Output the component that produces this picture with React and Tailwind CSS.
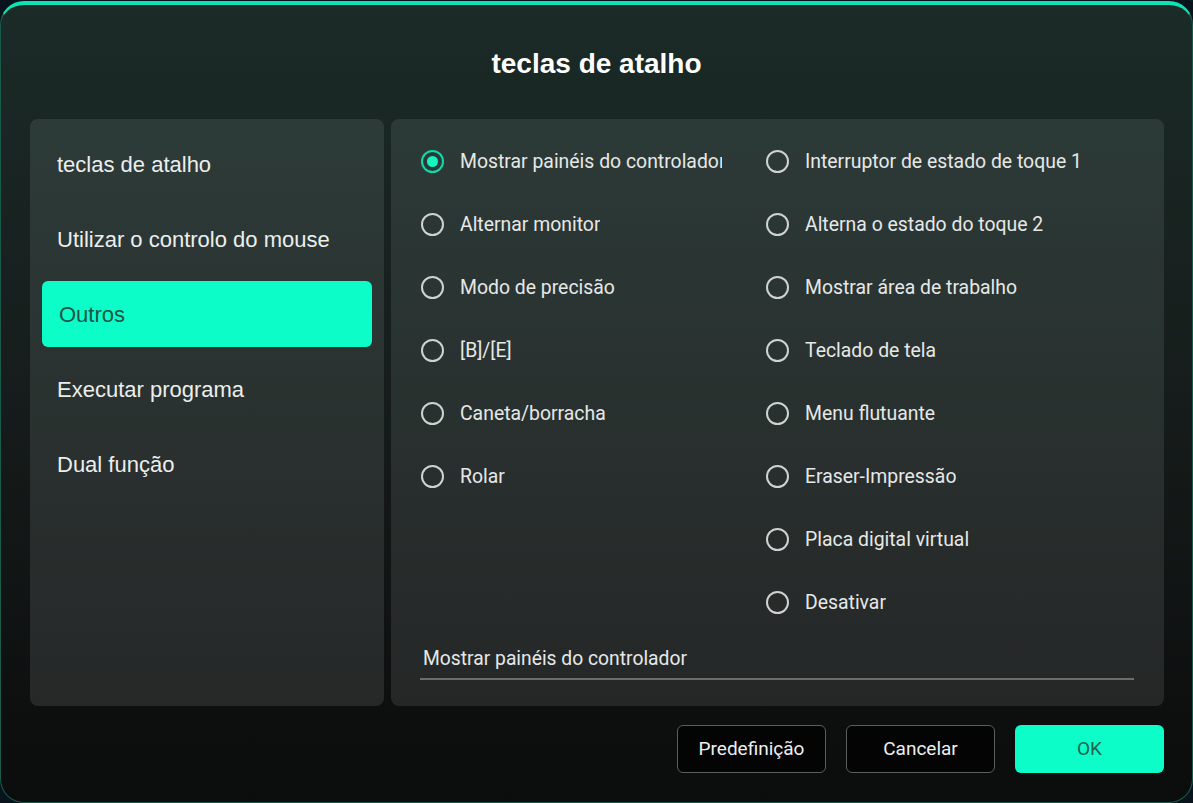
import React, { useState } from 'react';

const menuItems = [
  'teclas de atalho',
  'Utilizar o controlo do mouse',
  'Outros',
  'Executar programa',
  'Dual função',
];

const leftOptions = [
  'Mostrar painéis do controlador',
  'Alternar monitor',
  'Modo de precisão',
  '[B]/[E]',
  'Caneta/borracha',
  'Rolar',
];

const rightOptions = [
  'Interruptor de estado de toque 1',
  'Alterna o estado do toque 2',
  'Mostrar área de trabalho',
  'Teclado de tela',
  'Menu flutuante',
  'Eraser-Impressão',
  'Placa digital virtual',
  'Desativar',
];

const Radio = ({ label, checked, onSelect, clip }) => (
  <button
    type="button"
    onClick={onSelect}
    className="flex h-[63px] items-center gap-[16px] text-left"
  >
    <span
      className={`flex h-[23px] w-[23px] shrink-0 items-center justify-center rounded-full border-2 ${
        checked ? 'border-[#12d9ac]' : 'border-[#cfd2d1]'
      }`}
    >
      {checked && <span className="h-[11px] w-[11px] rounded-full bg-[#14f5c2]" />}
    </span>
    <span
      className={`overflow-hidden whitespace-nowrap text-[19.4px] text-[#e6e8e7] ${
        clip ? 'w-[262px]' : ''
      }`}
    >
      {label}
    </span>
  </button>
);

const App = () => {
  const [tab, setTab] = useState('Outros');
  const [choice, setChoice] = useState('Mostrar painéis do controlador');

  return (
    <div className="min-h-[803px] bg-[#08131c] pt-[1px] font-['Liberation_Sans',Arial,sans-serif]">
      <div className="flex h-[802px] flex-col rounded-[24px] border-x border-b border-t-[4px] border-[#1a5a4b] border-t-[#10e2b3] bg-gradient-to-b from-[#1b2b27] via-[#161c1b] to-[#0b0c0c]">
        <div className="flex h-[114px] items-center justify-center pt-[4px]">
          <h1 className="text-[28px] font-bold text-white">teclas de atalho</h1>
        </div>

        <div className="flex h-[587px] gap-[7px] pl-[29px] pr-[28px]">
          {/* side menu */}
          <nav className="flex w-[354px] flex-col gap-[9px] rounded-[8px] bg-gradient-to-b from-[#2d3b38] to-[#262828] px-[12px] pt-[12px]">
            {menuItems.map((item) => (
              <button
                key={item}
                type="button"
                onClick={() => setTab(item)}
                className={`flex h-[66px] items-center rounded-[6px] pr-[15px] text-left text-[22px] ${
                  tab === item ? 'bg-[#0dfdc9] pl-[17px] text-[#1d5447]' : 'pl-[15px] text-[#eceeed]'
                }`}
              >
                {item}
              </button>
            ))}
          </nav>

          {/* options */}
          <section className="flex w-[773px] flex-col rounded-[8px] bg-gradient-to-b from-[#2c3a37] to-[#252727] pt-[11px] font-['Roboto',sans-serif]">
            <div className="flex">
              <div className="flex w-[375px] flex-col pl-[30px]">
                {leftOptions.map((o, i) => (
                  <Radio
                    key={o}
                    label={o}
                    clip={i === 0}
                    checked={choice === o}
                    onSelect={() => setChoice(o)}
                  />
                ))}
              </div>
              <div className="flex flex-col">
                {rightOptions.map((o) => (
                  <Radio key={o} label={o} checked={choice === o} onSelect={() => setChoice(o)} />
                ))}
              </div>
            </div>
            <div className="ml-[29px] mt-[11px] w-[714px] border-b-2 border-[#6b6d6c] pb-[4px] pl-[3px] text-[19.3px] text-[#e6e8e7]">
              {choice}
            </div>
          </section>
        </div>

        <div className="flex justify-end gap-[20px] pr-[28px] pt-[19px] font-['Roboto',sans-serif] text-[19px]">
          <button
            type="button"
            className="h-[48px] w-[149px] rounded-[6px] border-[1.5px] border-[#5c5e5d] bg-[#040404] text-[#eeeeee]"
          >
            Predefinição
          </button>
          <button
            type="button"
            className="h-[48px] w-[149px] rounded-[6px] border-[1.5px] border-[#5c5e5d] bg-[#040404] text-[#eeeeee]"
          >
            Cancelar
          </button>
          <button
            type="button"
            className="h-[48px] w-[149px] rounded-[6px] bg-[#0dfdc9] text-[#1d6453]"
          >
            OK
          </button>
        </div>
      </div>
    </div>
  );
};

export default App;
